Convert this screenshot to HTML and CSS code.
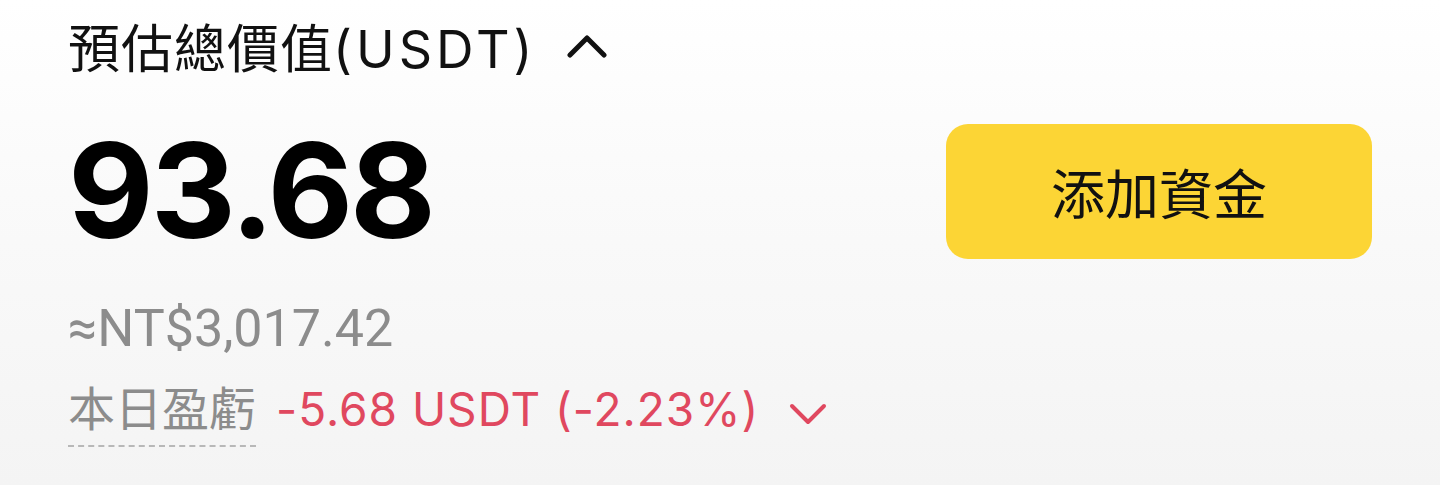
FILE: index.html
```html
<!DOCTYPE html>
<html lang="zh-Hant">
<head>
<meta charset="utf-8">
<link rel="stylesheet" href="styles.css">
</head>
<body>
<div class="page">
  <div class="left">
    <div class="title">
      <span class="title-text">預估總價值<span class="title-latin">(USDT)</span></span>
      <svg class="caret-up" width="40" height="24" viewBox="0 0 40 24"><path d="M3 21 L20 4 L37 21" fill="none" stroke="#111" stroke-width="5" stroke-linecap="round" stroke-linejoin="round"/></svg>
    </div>
    <div class="amount">93.68</div>
    <div class="fiat">≈NT$3,017.42</div>
    <div class="pnl">
      <span class="pnl-label">本日盈虧</span>
      <span class="pnl-value">-5.68 USDT (-2.23%)</span>
      <svg class="caret-down" width="38" height="24" viewBox="0 0 38 24"><path d="M3 4 L19 20 L35 4" fill="none" stroke="#E0485F" stroke-width="4" stroke-linecap="round" stroke-linejoin="round"/></svg>
    </div>
  </div>
  <div class="right">
    <button class="add-btn">添加資金</button>
  </div>
</div>
</body>
</html>
```

FILE: styles.css
```css
html, body {
  margin: 0;
  padding: 0;
}
body {
  width: 1440px;
  height: 485px;
  overflow: hidden;
  background: linear-gradient(180deg, #ffffff 0%, #fafafa 40%, #f4f4f4 100%);
  font-family: Inter, "Noto Sans CJK TC", sans-serif;
  color: #111;
}
.page {
  display: flex;
  justify-content: space-between;
  padding: 0 68px 0 68px;
}
.left {
  display: flex;
  flex-direction: column;
}
.title {
  display: flex;
  align-items: center;
  height: 100px;
}
.title-text {
  font-family: Inter, "Noto Sans CJK TC", sans-serif;
  font-size: 52px;
  font-weight: 400;
  letter-spacing: 1px;
  line-height: 100px;
}
.title-latin {
  letter-spacing: 4px;
}
.caret-up {
  margin-left: 30px;
  margin-top: -8px;
}
.amount {
  font-family: Inter, sans-serif;
  font-weight: 700;
  font-size: 132px;
  line-height: 160px;
  letter-spacing: -3px;
  margin-top: 10px;
  color: #000;
}
.fiat {
  font-family: Roboto, sans-serif;
  font-size: 52px;
  line-height: 70px;
  color: #8c8c8c;
  margin-top: 24px;
}
.pnl {
  display: flex;
  align-items: baseline;
  margin-top: 10px;
}
.pnl-label {
  font-family: "Noto Sans CJK TC", sans-serif;
  font-size: 47px;
  color: #8c8c8c;
  line-height: 64px;
  padding-bottom: 7px;
  border-bottom: 2px dashed #b8b8b8;
}
.pnl-value {
  font-family: Inter, "Noto Sans CJK TC", sans-serif;
  font-size: 46px;
  letter-spacing: 1px;
  color: #E0485F;
  margin-left: 20px;
}
.caret-down {
  margin-left: 30px;
  margin-bottom: 4px;
}
.right {
  display: flex;
  padding-top: 124px;
}
.add-btn {
  width: 426px;
  height: 135px;
  border: none;
  border-radius: 22px;
  background: #FCD535;
  font-family: "Noto Sans CJK TC", sans-serif;
  font-size: 54px;
  color: #111;
  padding: 0;
  cursor: pointer;
}
```
